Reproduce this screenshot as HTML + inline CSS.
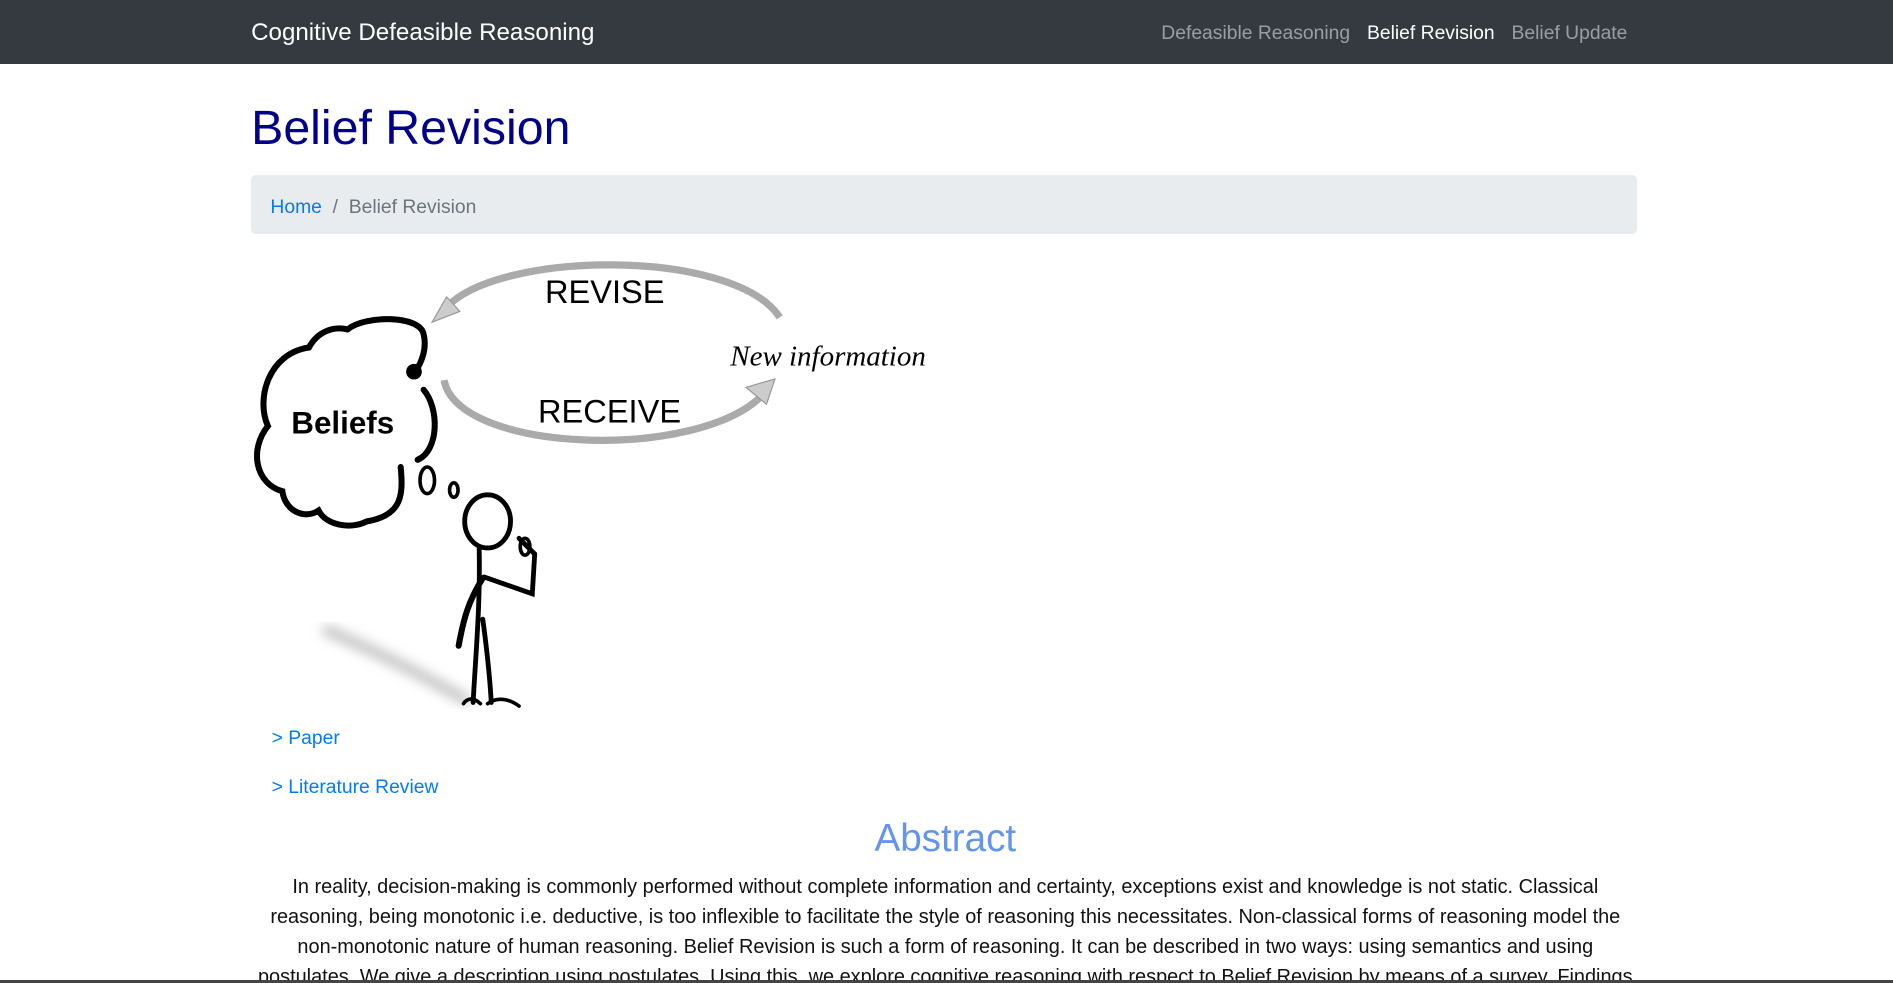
<!DOCTYPE html>
<html><head><meta charset="utf-8">
<style>
html,body{margin:0;padding:0;overflow:hidden;background:#fff}
body{width:1568px;height:814px;zoom:1.20727;position:relative;font-family:"Liberation Sans","DejaVu Sans",sans-serif;color:#212529}
.nav{position:absolute;left:0;top:0;width:1568px;height:53px;background:#343a40}
.brand{position:absolute;left:208px;top:16px;font-size:20px;color:#fff}
.links{position:absolute;right:220px;top:19px;font-size:16px;color:rgba(255,255,255,.5);white-space:nowrap}
.links span{margin-left:14px}
.links .a{color:#fff}
h1{position:absolute;left:208px;top:83px;margin:0;font-weight:400;font-size:40px;color:#00008b}
.bc{position:absolute;left:208px;top:145px;width:1148px;height:49px;background:#e9ecef;border-radius:4px;font-size:16px;color:#6c757d;line-height:55px}
.bc span{margin-left:16px}
a{color:#007bff;text-decoration:none}
.lk{position:absolute;left:225px;font-size:16px;color:#007bff}
.abs{position:absolute;left:0;width:1566px;text-align:center;top:677px;font-size:32px;color:#6495ed}
.p{position:absolute;left:0;width:1566px;top:722px;text-align:center;font-size:16.5px;line-height:25px;white-space:nowrap;color:#111}
.bar{position:absolute;left:0;top:812px;width:1568px;height:2px;background:#444}
</style></head><body>
<div class="nav"><div class="brand">Cognitive Defeasible Reasoning</div>
<div class="links"><span>Defeasible Reasoning</span><span class="a">Belief Revision</span><span>Belief Update</span></div></div>
<h1>Belief Revision</h1>
<div class="bc"><span><a>Home</a> &nbsp;/&nbsp; Belief Revision</span></div>
<svg style="position:absolute;left:208px;top:213px" width="580" height="380" viewBox="0 0 580 380">
<defs><filter id="bl"><feGaussianBlur stdDeviation="5"/></filter></defs>
<path d="M60 308 C100 325,140 345,180 368" stroke="#bbb" stroke-width="8" fill="none" filter="url(#bl)"/>
<path d="M160 44 C200 -6,400 -8,438 50" stroke="#aaa" stroke-width="6" fill="none"/>
<polygon points="150,54 162,33 173,45" fill="#ccc" stroke="#999"/>
<path d="M160 102 C170 162,370 170,424 114" stroke="#aaa" stroke-width="6" fill="none"/>
<polygon points="434,101 410,108 427,122" fill="#ccc" stroke="#999"/>
<text x="293" y="38" font-size="27" text-anchor="middle" font-family="Liberation Sans Narrow, Liberation Sans, sans-serif">REVISE</text>
<text x="297" y="137" font-size="27" text-anchor="middle" font-family="Liberation Sans Narrow, Liberation Sans, sans-serif">RECEIVE</text>
<text x="397" y="90" font-size="24" font-style="italic" font-family="Liberation Serif, serif">New information</text>
<g stroke="#000" stroke-width="5" fill="none" stroke-linecap="round">
<path d="M80 60 C95 48,140 48,143 64 C146 76,141 88,136 95"/>
<circle cx="135" cy="95" r="4" fill="#000"/>
<path d="M143 110 C156 125,156 160,138 168"/>
<path d="M124 174 C126 196,126 214,96 219 C82 226,62 222,56 210 C44 218,28 210,26 194 C4 188,-2 160,14 140 C4 118,14 80,48 75 C55 62,68 57,80 60"/>
<ellipse cx="146" cy="185" rx="6" ry="11" stroke-width="3"/>
<ellipse cx="168" cy="193" rx="3.5" ry="6" stroke-width="3"/>
<ellipse cx="196" cy="219" rx="19" ry="22" stroke-width="4"/>
<path d="M189 241 C190 290,186 330,184 369 M192 300 C196 330,198 350,199 369" stroke-width="4"/>
<path d="M193 265 L233 279 L235 246 L222 233" stroke-width="4"/>
<ellipse cx="227" cy="240" rx="4" ry="7" stroke-width="3"/>
<path d="M192 266 C180 285,176 300,172 322" stroke-width="5"/>
<path d="M176 370 C180 364,186 366,190 370 M196 370 C204 364,214 366,222 372" stroke-width="3"/>
</g>
<text x="76" y="146" font-size="26" font-weight="bold" text-anchor="middle" font-family="Liberation Sans, sans-serif">Beliefs</text>
</svg>
<div class="lk" style="top:603px">&gt; Paper</div>
<div class="lk" style="top:644px">&gt; Literature Review</div>
<div class="abs">Abstract</div>
<div class="p">In reality, decision-making is commonly performed without complete information and certainty, exceptions exist and knowledge is not static. Classical<br>reasoning, being monotonic i.e. deductive, is too inflexible to facilitate the style of reasoning this necessitates. Non-classical forms of reasoning model the<br>non-monotonic nature of human reasoning. Belief Revision is such a form of reasoning. It can be described in two ways: using semantics and using<br>postulates. We give a description using postulates. Using this, we explore cognitive reasoning with respect to Belief Revision by means of a survey. Findings</div>
<div class="bar"></div>
</body></html>
